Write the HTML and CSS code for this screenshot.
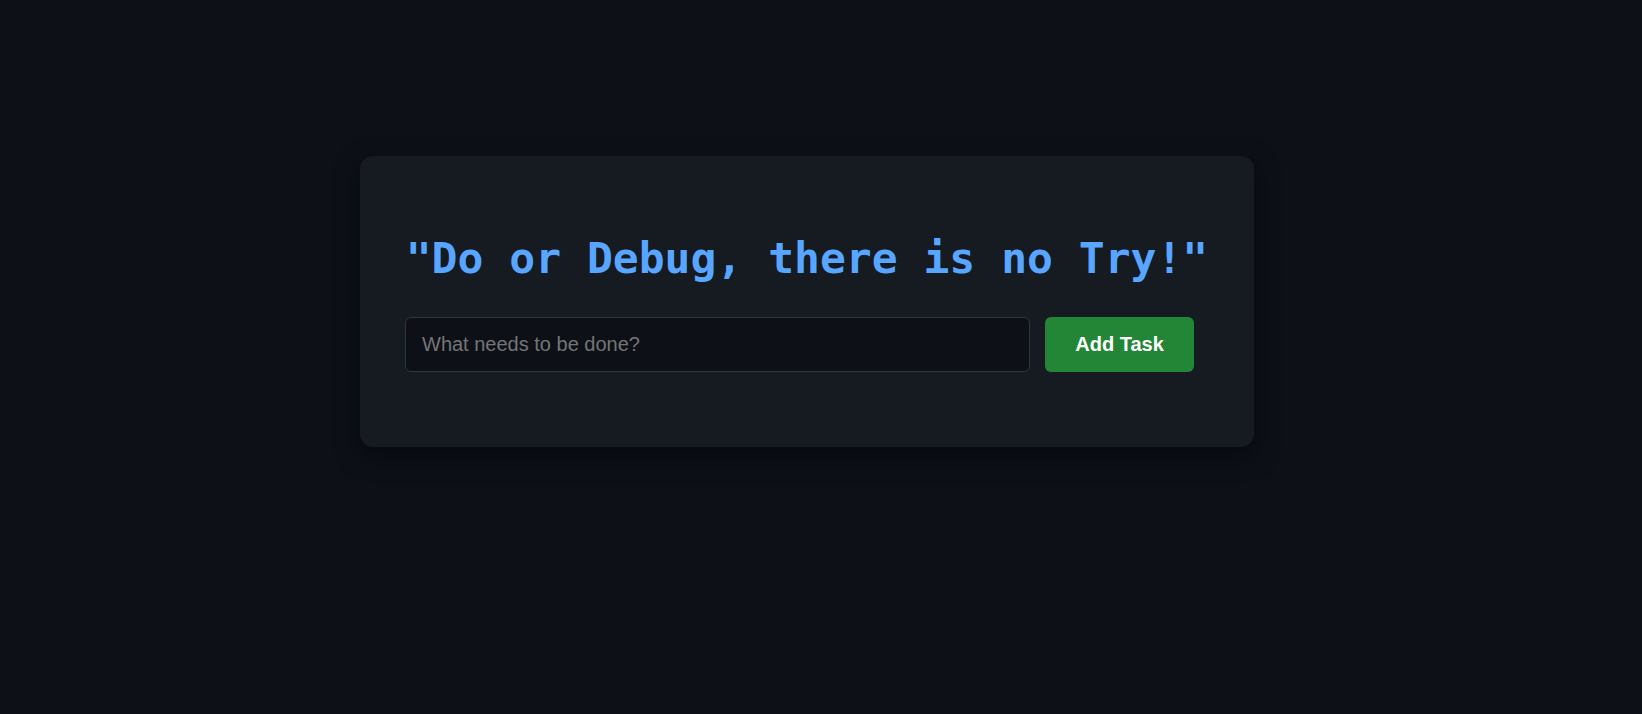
FILE: index.html
```html
<!DOCTYPE html>
<html lang="en">
<head>
<meta charset="utf-8">
<title>Todo</title>
<link rel="stylesheet" href="styles.css">
</head>
<body>
<main class="page">
  <section class="card">
    <h1 class="title">"Do or Debug, there is no Try!"</h1>
    <form class="task-form" onsubmit="return false;">
      <input class="task-input" type="text" placeholder="What needs to be done?">
      <button class="task-button" type="submit">Add Task</button>
    </form>
  </section>
</main>
</body>
</html>
```

FILE: styles.css
```css
html, body {
  margin: 0;
  padding: 0;
  background: #0d1117;
  height: 100%;
}

.page {
  display: flex;
  align-items: flex-start;
  padding: 156px 0 0 360px;
  box-sizing: border-box;
}

.card {
  width: 894px;
  box-sizing: border-box;
  height: 291px;
  padding: 77px 45px 0 45px;
  background: #161b22;
  border-radius: 13px;
  box-shadow: 0 8px 24px rgba(1, 4, 9, 0.6);
}

.title {
  margin: 0 0 34px 0;
  font-family: "DejaVu Sans Mono", "Liberation Mono", monospace;
  font-weight: 700;
  font-size: 43px;
  line-height: 50px;
  color: #58a6ff;
  text-align: center;
  white-space: nowrap;
}

.task-form {
  display: flex;
  gap: 15px;
  margin: 0;
}

.task-input {
  width: 625px;
  height: 55px;
  box-sizing: border-box;
  padding: 0 16px;
  background: #0d1117;
  border: 1px solid #30363d;
  border-radius: 6px;
  color: #c9d1d9;
  font-family: "Liberation Sans", Arial, sans-serif;
  font-size: 20px;
  outline: none;
}

.task-input::placeholder {
  color: #757575;
}

.task-button {
  width: 149px;
  height: 55px;
  box-sizing: border-box;
  border: none;
  border-radius: 6px;
  background: #238636;
  color: #ffffff;
  font-family: "Liberation Sans", Arial, sans-serif;
  font-weight: 700;
  font-size: 20px;
  cursor: pointer;
}
```
